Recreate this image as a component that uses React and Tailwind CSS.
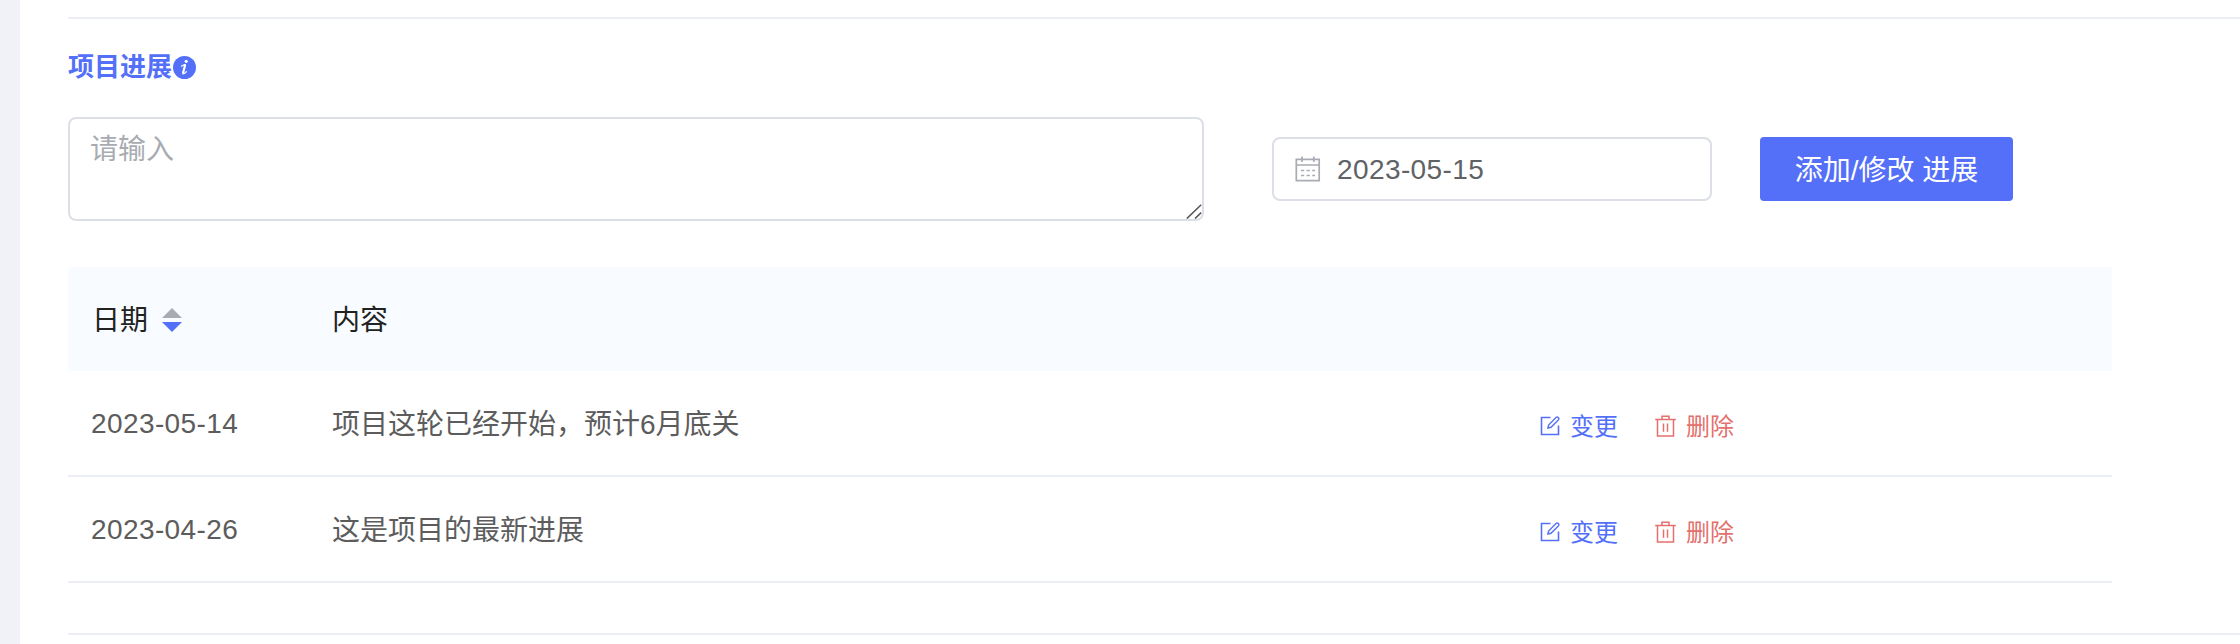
const rows = [
  { date: "2023-05-14", text: "项目这轮已经开始，预计6月底关" },
  { date: "2023-04-26", text: "这是项目的最新进展" },
];

function InfoIcon() {
  return (
    <span className="ml-[1px] flex h-[23px] w-[23px] items-center justify-center rounded-full bg-[#5470f8]">
      <svg width="23" height="23" viewBox="0 0 23 23" fill="none" stroke="#fff" strokeLinecap="round" strokeLinejoin="round">
        <circle cx="13.2" cy="5.3" r="1.6" fill="#fff" stroke="none" />
        <path d="M8.4 10.2c1.4-.9 2.5-1.3 4-1.5" strokeWidth="1.2" />
        <path d="M12 9.4l-1.9 7.4" strokeWidth="2.2" />
        <path d="M9.8 17.9c1.3.1 2.6-.8 3.7-2.2" strokeWidth="1.2" />
      </svg>
    </span>
  );
}

function CalendarIcon() {
  return (
    <svg width="26" height="26" viewBox="0 0 26 26" fill="none" stroke="#a8abb2" strokeWidth="1.7">
      <path d="M1.3 3.3H24.2V24.7H1.3ZM1.3 9H24.2M7 .5V6M18.8 .5V6" />
      <path d="M6 14.5H9.2M11.6 14.5H14.8M17.2 14.5H20M6 19.5H9.2M11.6 19.5H14.8M17.2 19.5H20" />
    </svg>
  );
}

function EditIcon() {
  return (
    <svg width="20" height="20" viewBox="0 0 20 20" fill="none" stroke="currentColor" strokeWidth="1.6">
      <path d="M10.5 1.5H1.5V18.5H18.5V9.4" />
      <path d="M7.9 12l.7-3L16 1.6a1.6 1.6 0 0 1 2.3 2.3L11 11.3Z" strokeWidth="1.4" />
    </svg>
  );
}

function TrashIcon() {
  return (
    <svg width="21" height="22" viewBox="0 0 21 22" fill="none" stroke="currentColor" strokeWidth="1.5">
      <path d="M.2 4.5H20.8M2.5 4.5V21H18.5V4.5M7 4.4V1.2H14V4.4M8.5 8.4V16.8M12.5 8.4V16.8" />
    </svg>
  );
}

export default function App() {
  return (
    <div className="flex h-[644px] w-[2240px] overflow-hidden bg-[#f0f2f7] pl-5 font-['Liberation_Sans','Noto_Sans_CJK_SC',sans-serif]">
      <main className="flex-1 bg-white pl-12 pt-[17px]">
        <section className="h-[618px] border-y-2 border-[#ebeef5]">
          <h2 className="mt-[28px] flex h-10 items-center text-[26px] font-bold leading-10 text-[#5470f8]">
            <span className="w-[104px] whitespace-nowrap">项目进展</span>
            <InfoIcon />
          </h2>
          <div className="mt-[30px] flex items-center">
            <div className="relative h-[104px] w-[1136px]">
              <textarea
                placeholder="请输入"
                className="block h-full w-full resize-none rounded-[8px] border-2 border-[#dcdfe6] px-5 py-[10px] text-[28px] leading-[42px] placeholder:text-[#a8abb2]"
              />
              <svg className="absolute bottom-0.5 right-0.5" width="16" height="15" viewBox="0 0 16 15" fill="none" stroke="#555" strokeWidth="1.5">
                <path d="M.8 14.6L15.2 .8M9 14.6L15.2 8.6" />
              </svg>
            </div>
            <div className="ml-[68px] flex h-16 w-[440px] items-center rounded-[8px] border-2 border-[#dcdfe6] pl-[21px] text-[28px] tracking-[0.4px] text-[#606266]">
              <CalendarIcon />
              <span className="ml-4 pt-px">2023-05-15</span>
            </div>
            <button className="ml-12 flex h-16 w-[253px] items-center justify-center rounded-[4px] bg-[#5470f8] text-[28px] text-white">
              <span className="whitespace-nowrap pt-[3px]">添加/修改 进展</span>
            </button>
          </div>
          <div className="mt-[46px] w-[2044px] text-[28px] leading-[42px]">
            <div className="flex h-[104px] items-center bg-[#f8fbff] pt-[3px] text-[#222]">
              <div className="flex w-[264px] items-center pl-6">
                日期
                <svg className="mb-[2px] ml-[14px]" width="20" height="24" viewBox="0 0 20 24">
                  <path d="M0 10L10 0L20 10Z" fill="#a8abb2" />
                  <path d="M0 14H20L10 24Z" fill="#5470f8" />
                </svg>
              </div>
              <div>内容</div>
            </div>
            {rows.map((row) => (
              <div key={row.date} className="flex h-[106px] items-center border-b-2 border-[#ebeef5] pt-[2px] text-[#5c5c5c]">
                <div className="w-[264px] pl-[23px] tracking-[0.4px]">{row.date}</div>
                <div className="w-[1208px] pt-px">{row.text}</div>
                <div className="flex items-center pt-[4px] text-[24px]">
                  <button className="flex items-center text-[#5470f8]">
                    <EditIcon />
                    <span className="ml-[10px] pt-[2px]">变更</span>
                  </button>
                  <button className="ml-[37px] flex items-center text-[#e3706c]">
                    <TrashIcon />
                    <span className="ml-[10px] pt-[2px]">删除</span>
                  </button>
                </div>
              </div>
            ))}
          </div>
        </section>
      </main>
    </div>
  );
}
